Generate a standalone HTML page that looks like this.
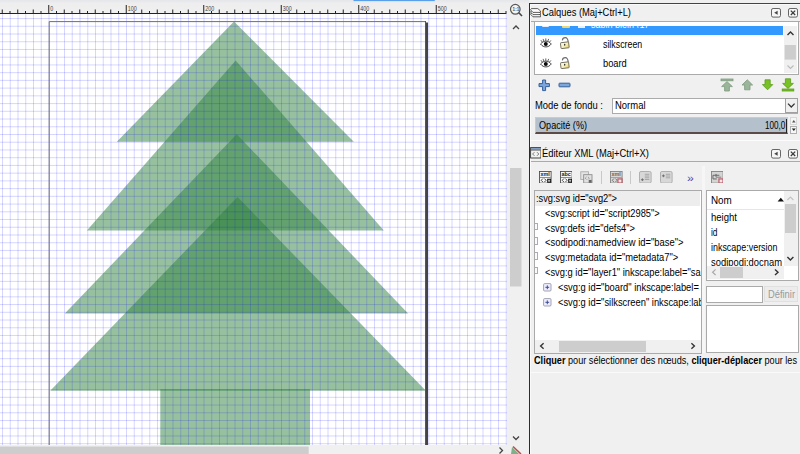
<!DOCTYPE html>
<html lang="fr"><head><meta charset="utf-8"><title>Inkscape</title>
<style>
html,body{margin:0;padding:0;background:#f0f0f0}
body{width:800px;height:454px;position:relative;overflow:hidden;font-family:"Liberation Sans",sans-serif;font-size:12px}
.a{position:absolute;display:block}
.t{position:absolute;white-space:pre;line-height:normal;transform-origin:0 0;display:block}
#rp{position:absolute;left:0;top:0;width:800px;height:454px;overflow:hidden}
</style></head><body>
<svg id="cv" width="529" height="454" viewBox="0 0 529 454" style="position:absolute;left:0;top:0">
<defs><linearGradient id="rg" x1="0" y1="0" x2="0" y2="1"><stop offset="0" stop-color="#e4e6ea"/><stop offset="0.25" stop-color="#eeeeef"/><stop offset="1" stop-color="#f0f0f0"/></linearGradient><clipPath id="cc"><rect x="0" y="14" width="507" height="431"/></clipPath></defs>
<rect x="0" y="0" width="529" height="454" fill="#f0f0f0"/>
<rect x="0" y="0" width="529" height="14" fill="url(#rg)"/>
<rect x="353.5" y="0" width="81.3" height="1.1" fill="#5aa0e8"/>
<rect x="0" y="14" width="507" height="431" fill="#ffffff"/>
<g clip-path="url(#cc)">
<polygon points="234,21.5 116.8,141.8 353.8,141.8" fill="#2f823f" fill-opacity="0.5"/>
<polygon points="235.7,60.6 86.9,230.6 383.8,230.6" fill="#2f823f" fill-opacity="0.5"/>
<polygon points="236.7,134.2 64.8,313.5 408.1,313.5" fill="#2f823f" fill-opacity="0.5"/>
<polygon points="237.5,196.9 50.2,390.8 425.9,390.8" fill="#2f823f" fill-opacity="0.5"/>
<rect x="160.3" y="389.3" width="149.7" height="70" fill="#2f823f" fill-opacity="0.5"/>
<path d="M2.50 14V445M10.25 14V445M18.00 14V445M25.75 14V445M33.50 14V445M41.25 14V445M49.00 14V445M56.75 14V445M64.50 14V445M72.25 14V445M80.00 14V445M87.75 14V445M95.50 14V445M103.25 14V445M111.00 14V445M118.75 14V445M126.50 14V445M134.25 14V445M142.00 14V445M149.75 14V445M157.50 14V445M165.25 14V445M173.00 14V445M180.75 14V445M188.50 14V445M196.25 14V445M204.00 14V445M211.75 14V445M219.50 14V445M227.25 14V445M235.00 14V445M242.75 14V445M250.50 14V445M258.25 14V445M266.00 14V445M273.75 14V445M281.50 14V445M289.25 14V445M297.00 14V445M304.75 14V445M312.50 14V445M320.25 14V445M328.00 14V445M335.75 14V445M343.50 14V445M351.25 14V445M359.00 14V445M366.75 14V445M374.50 14V445M382.25 14V445M390.00 14V445M397.75 14V445M405.50 14V445M413.25 14V445M421.00 14V445M428.75 14V445M436.50 14V445M444.25 14V445M452.00 14V445M459.75 14V445M467.50 14V445M475.25 14V445M483.00 14V445M490.75 14V445M498.50 14V445M506.25 14V445M0 18.55H507M0 26.28H507M0 34.01H507M0 41.74H507M0 49.47H507M0 57.20H507M0 64.93H507M0 72.66H507M0 80.39H507M0 88.12H507M0 95.85H507M0 103.58H507M0 111.31H507M0 119.04H507M0 126.77H507M0 134.50H507M0 142.23H507M0 149.96H507M0 157.69H507M0 165.42H507M0 173.15H507M0 180.88H507M0 188.61H507M0 196.34H507M0 204.07H507M0 211.80H507M0 219.53H507M0 227.26H507M0 234.99H507M0 242.72H507M0 250.45H507M0 258.18H507M0 265.91H507M0 273.64H507M0 281.37H507M0 289.10H507M0 296.83H507M0 304.56H507M0 312.29H507M0 320.02H507M0 327.75H507M0 335.48H507M0 343.21H507M0 350.94H507M0 358.67H507M0 366.40H507M0 374.13H507M0 381.86H507M0 389.59H507M0 397.32H507M0 405.05H507M0 412.78H507M0 420.51H507M0 428.24H507M0 435.97H507M0 443.70H507" stroke="#0000ff" stroke-opacity="0.16" stroke-width="1" fill="none"/>
<path d="M49.2 446V21.6H425.5" stroke="#707070" stroke-width="1" fill="none"/>
<rect x="425" y="21" width="1" height="430" fill="#555"/>
<rect x="426" y="22.5" width="2" height="430" fill="#444"/>
</g>
<rect x="0" y="13" width="506.5" height="1" fill="#222"/>
<g fill="#222"><rect x="1.75" y="9.5" width="1" height="4"/><rect x="9.5" y="11" width="1" height="2"/><rect x="17.25" y="9.5" width="1" height="4"/><rect x="25.0" y="11" width="1" height="2"/><rect x="32.75" y="9.5" width="1" height="4"/><rect x="40.5" y="11" width="1" height="2"/><rect x="48.25" y="5" width="1" height="8"/><rect x="56.0" y="11" width="1" height="2"/><rect x="63.75" y="9.5" width="1" height="4"/><rect x="71.5" y="11" width="1" height="2"/><rect x="79.25" y="9.5" width="1" height="4"/><rect x="87.0" y="11" width="1" height="2"/><rect x="94.75" y="9.5" width="1" height="4"/><rect x="102.5" y="11" width="1" height="2"/><rect x="110.25" y="9.5" width="1" height="4"/><rect x="118.0" y="11" width="1" height="2"/><rect x="125.75" y="5" width="1" height="8"/><rect x="133.5" y="11" width="1" height="2"/><rect x="141.25" y="9.5" width="1" height="4"/><rect x="149.0" y="11" width="1" height="2"/><rect x="156.75" y="9.5" width="1" height="4"/><rect x="164.5" y="11" width="1" height="2"/><rect x="172.25" y="9.5" width="1" height="4"/><rect x="180.0" y="11" width="1" height="2"/><rect x="187.75" y="9.5" width="1" height="4"/><rect x="195.5" y="11" width="1" height="2"/><rect x="203.25" y="5" width="1" height="8"/><rect x="211.0" y="11" width="1" height="2"/><rect x="218.75" y="9.5" width="1" height="4"/><rect x="226.5" y="11" width="1" height="2"/><rect x="234.25" y="9.5" width="1" height="4"/><rect x="242.0" y="11" width="1" height="2"/><rect x="249.75" y="9.5" width="1" height="4"/><rect x="257.5" y="11" width="1" height="2"/><rect x="265.25" y="9.5" width="1" height="4"/><rect x="273.0" y="11" width="1" height="2"/><rect x="280.75" y="5" width="1" height="8"/><rect x="288.5" y="11" width="1" height="2"/><rect x="296.25" y="9.5" width="1" height="4"/><rect x="304.0" y="11" width="1" height="2"/><rect x="311.75" y="9.5" width="1" height="4"/><rect x="319.5" y="11" width="1" height="2"/><rect x="327.25" y="9.5" width="1" height="4"/><rect x="335.0" y="11" width="1" height="2"/><rect x="342.75" y="9.5" width="1" height="4"/><rect x="350.5" y="11" width="1" height="2"/><rect x="358.25" y="5" width="1" height="8"/><rect x="366.0" y="11" width="1" height="2"/><rect x="373.75" y="9.5" width="1" height="4"/><rect x="381.5" y="11" width="1" height="2"/><rect x="389.25" y="9.5" width="1" height="4"/><rect x="397.0" y="11" width="1" height="2"/><rect x="404.75" y="9.5" width="1" height="4"/><rect x="412.5" y="11" width="1" height="2"/><rect x="420.25" y="9.5" width="1" height="4"/><rect x="428.0" y="11" width="1" height="2"/><rect x="435.75" y="5" width="1" height="8"/><rect x="443.5" y="11" width="1" height="2"/><rect x="451.25" y="9.5" width="1" height="4"/><rect x="459.0" y="11" width="1" height="2"/><rect x="466.75" y="9.5" width="1" height="4"/><rect x="474.5" y="11" width="1" height="2"/><rect x="482.25" y="9.5" width="1" height="4"/><rect x="490.0" y="11" width="1" height="2"/><rect x="497.75" y="9.5" width="1" height="4"/><rect x="505.5" y="11" width="1" height="2"/></g>
<text x="50.15" y="11" font-family="Liberation Sans, sans-serif" font-size="6.6" fill="#444" textLength="3.0" lengthAdjust="spacingAndGlyphs">0</text>
<text x="127.65" y="11" font-family="Liberation Sans, sans-serif" font-size="6.6" fill="#444" textLength="9.0" lengthAdjust="spacingAndGlyphs">100</text>
<text x="205.15" y="11" font-family="Liberation Sans, sans-serif" font-size="6.6" fill="#444" textLength="9.0" lengthAdjust="spacingAndGlyphs">200</text>
<text x="282.65" y="11" font-family="Liberation Sans, sans-serif" font-size="6.6" fill="#444" textLength="9.0" lengthAdjust="spacingAndGlyphs">300</text>
<text x="360.15" y="11" font-family="Liberation Sans, sans-serif" font-size="6.6" fill="#444" textLength="9.0" lengthAdjust="spacingAndGlyphs">400</text>
<text x="437.65" y="11" font-family="Liberation Sans, sans-serif" font-size="6.6" fill="#444" textLength="9.0" lengthAdjust="spacingAndGlyphs">500</text>
<g fill="none" stroke="#585858" stroke-width="1.25"><circle cx="515.3" cy="9.3" r="4.8" fill="#f4f4f2"/><path d="M518.8 12.8L522 16" stroke-width="1.6" stroke="#444"/></g>
<text x="512.6" y="11" font-family="Liberation Sans, sans-serif" font-size="4.6" font-weight="bold" fill="#555">1:1</text>
<path d="M513 29L516 26L519 29" stroke="#444" stroke-width="1.3" fill="none"/>
<rect x="510" y="168" width="11.5" height="118.5" fill="#cdcdcd"/>
<path d="M513 436.5L516 439.5L519 436.5" stroke="#444" stroke-width="1.3" fill="none"/>
<rect x="0" y="445" width="507" height="9" fill="#f0f0f0"/>
<rect x="0" y="446.5" width="308.7" height="8" fill="#cdcdcd"/>
<path d="M499.5 447.5L502.5 450.5L499.5 453.5" stroke="#444" stroke-width="1.3" fill="none"/>
<path d="M512 447 L519 454 L511 454Z" fill="#7fb08a"/><path d="M513 446.5L521 454" stroke="#b05050" stroke-width="1.5"/>
</svg>
<div id="rp">
<div class="a" style="left:529px;top:3px;width:271px;height:1px;background:#444"></div>
<div class="a" style="left:529px;top:3px;width:1.2px;height:451px;background:#2c2c2c"></div>
<div class="a" style="left:530.2px;top:4px;width:0.8px;height:450px;background:#fafafa"></div>
<div class="a" style="left:530.2px;top:4px;width:269.8px;height:0.8px;background:#fafafa"></div>
<svg class="a" style="left:530px;top:7.6px" width="11.4" height="10" viewBox="0 0 11.4 10"><g fill="#fbfbfb" stroke="#2a2a2a" stroke-width="0.75" stroke-linejoin="round"><path d="M1.4 5H7.8L10.6 7.4V8.8H3L0.5 6.2Z"/><path d="M1.4 2.8H7.8L10.6 5.2V6.6H3L0.5 4Z"/><path d="M1.4 0.6H7.8L10.6 3V4.4H3L0.5 1.8Z"/></g></svg>
<span class="t" style="left:541.8px;top:5.8px;font-size:10.8px;color:#000;transform:scaleX(0.8671);">Calques (Maj+Ctrl+L)</span>
<svg class="a" style="left:771px;top:7.5px" width="28" height="10" viewBox="0 0 28 10"><rect x="0.5" y="0.5" width="9" height="8.6" rx="1.6" fill="#f6f6f6" stroke="#555" stroke-width="0.9"/><path d="M6.6 2.8V6.8L3.2 4.8Z" fill="#444"/><rect x="17.5" y="0.5" width="9" height="8.6" rx="1.6" fill="#f6f6f6" stroke="#555" stroke-width="0.9"/><path d="M19.8 2.6L24.2 7M24.2 2.6L19.8 7" stroke="#3c3c3c" stroke-width="1.3"/></svg>
<div class="a" style="left:531px;top:21px;width:269px;height:1px;background:#aaa"></div>
<div class="a" style="left:534px;top:22px;width:265px;height:52.5px;background:#fff;border-left:1px solid #aaa;border-right:1px solid #aaa;border-bottom:1px solid #aaa;box-sizing:border-box"></div>
<div class="a" style="left:536px;top:25.5px;width:247.2px;height:9.4px;background:#3399ff"></div>
<div class="a" style="left:542px;top:25.5px;width:6.5px;height:1.6px;background:#e8eef8;border-radius:0 0 3px 3px"></div>
<div class="a" style="left:561.5px;top:25.5px;width:8px;height:2.2px;background:#e8d878;border-radius:0 0 1px 1px"></div>
<div class="a" style="left:577.5px;top:26.2px;width:7px;height:1.5px;background:#e6f0ff"></div>
<div class="a" style="left:591px;top:22px;width:60px;height:6.4px;overflow:hidden"><div class="a" style="left:0;top:3.5px;height:3px;width:60px;overflow:hidden"><span class="t" style="left:0.0px;top:-7.4px;font-size:10.8px;color:#fff;transform:scaleX(0.8343);">sapin plein (1)</span></div></div>
<svg class="a" style="left:539.5px;top:38px" width="12" height="10" viewBox="0 0 12 10"><path d="M0.5 6C2.5 3.7 4.2 3.2 5.9 3.2S9.5 3.8 11.3 6C9.5 8.2 7.8 8.9 5.9 8.9S2.3 8.2 0.5 6Z" fill="#fff" stroke="#222" stroke-width="0.85"/><circle cx="5.8" cy="5.9" r="2" fill="#0c0c0c"/><path d="M5.8 3V0.4M3.9 3.3L3.1 0.9M7.7 3.3L8.7 0.9M2.3 4.1L0.9 2.2M9.5 4.1L10.9 2.4" stroke="#333" stroke-width="0.75"/></svg>
<svg class="a" style="left:559.8px;top:37.4px" width="10" height="12" viewBox="0 0 10 12"><defs><linearGradient id="lk37" x1="0" y1="0" x2="1" y2="1"><stop offset="0" stop-color="#ffffff"/><stop offset="0.55" stop-color="#f4eeb8"/><stop offset="1" stop-color="#e2cf5e"/></linearGradient></defs><path d="M2.4 3.4C2.5 1.3 3.9 0.6 5.3 0.6C7.2 0.6 8 2.2 8.3 5.6" fill="none" stroke="#6c6c6c" stroke-width="1.1"/><rect x="0.7" y="5.3" width="8.2" height="5.9" rx="0.6" fill="url(#lk37)" stroke="#6e6a58" stroke-width="0.9" transform="rotate(-7 4.8 8.2)"/><ellipse cx="4.7" cy="7.7" rx="0.7" ry="1" fill="#2a2a22"/></svg>
<svg class="a" style="left:539.5px;top:57.5px" width="12" height="10" viewBox="0 0 12 10"><path d="M0.5 6C2.5 3.7 4.2 3.2 5.9 3.2S9.5 3.8 11.3 6C9.5 8.2 7.8 8.9 5.9 8.9S2.3 8.2 0.5 6Z" fill="#fff" stroke="#222" stroke-width="0.85"/><circle cx="5.8" cy="5.9" r="2" fill="#0c0c0c"/><path d="M5.8 3V0.4M3.9 3.3L3.1 0.9M7.7 3.3L8.7 0.9M2.3 4.1L0.9 2.2M9.5 4.1L10.9 2.4" stroke="#333" stroke-width="0.75"/></svg>
<svg class="a" style="left:559.8px;top:57px" width="10" height="12" viewBox="0 0 10 12"><defs><linearGradient id="lk57" x1="0" y1="0" x2="1" y2="1"><stop offset="0" stop-color="#ffffff"/><stop offset="0.55" stop-color="#f4eeb8"/><stop offset="1" stop-color="#e2cf5e"/></linearGradient></defs><path d="M2.4 3.4C2.5 1.3 3.9 0.6 5.3 0.6C7.2 0.6 8 2.2 8.3 5.6" fill="none" stroke="#6c6c6c" stroke-width="1.1"/><rect x="0.7" y="5.3" width="8.2" height="5.9" rx="0.6" fill="url(#lk57)" stroke="#6e6a58" stroke-width="0.9" transform="rotate(-7 4.8 8.2)"/><ellipse cx="4.7" cy="7.7" rx="0.7" ry="1" fill="#2a2a22"/></svg>
<span class="t" style="left:603.2px;top:38.3px;font-size:10.8px;color:#000;transform:scaleX(0.8164);">silkscreen</span>
<span class="t" style="left:603.2px;top:57.4px;font-size:10.8px;color:#000;transform:scaleX(0.8616);">board</span>
<div class="a" style="left:784.3px;top:25.5px;width:12.6px;height:47px;background:#f0f0f0"></div>
<svg class="a" style="left:784px;top:26px" width="13" height="47" viewBox="0 0 13 47"><path d="M3.5 9L6.5 6L9.5 9" stroke="#333" stroke-width="1.4" fill="none"/><rect x="0.7" y="19" width="11.2" height="14.6" fill="#cdcdcd"/><path d="M3.5 39.5L6.5 42.5L9.5 39.5" stroke="#bbb" stroke-width="1.2" fill="none"/></svg>
<svg class="a" style="left:538px;top:79px" width="34" height="13" viewBox="0 0 34 13"><path d="M4.6 1H7.6V4.6H11.4V7.6H7.6V11.6H4.6V7.6H1V4.6H4.6Z" fill="#7fa6d8" stroke="#33609e" stroke-width="1"/><rect x="21" y="4.2" width="11" height="3.6" rx="0.6" fill="#7fa6d8" stroke="#33609e" stroke-width="1"/></svg>
<svg class="a" style="left:719px;top:78px" width="78" height="14" viewBox="0 0 78 14"><g fill="#9ab59a" stroke="#7d9a7d" stroke-width="0.8"><rect x="2" y="1" width="12" height="1.8"/><path d="M5.6 13V8.6H2.6L8 3.6L13.4 8.6H10.4V13Z"/><path d="M25.6 11.8V7H23L28.3 1.8L33.6 7H31V11.8Z"/></g><g fill="#79c224" stroke="#5a9a1a" stroke-width="0.8"><path d="M46 1.8V6.6H43.4L48.6 11.8L53.8 6.6H51.2V1.8Z"/><path d="M66.4 0.8V5.4H63.6L69 10.4L74.4 5.4H71.6V0.8Z"/><rect x="63.2" y="11" width="11.6" height="2"/></g></svg>
<span class="t" style="left:534.7px;top:98.8px;font-size:10.8px;color:#000;transform:scaleX(0.8712);">Mode de fondu :</span>
<div class="a" style="left:612px;top:97.5px;width:186px;height:16px;background:#fff;border:1px solid #ababab;box-sizing:border-box"></div>
<div class="a" style="left:784.5px;top:98px;width:13.2px;height:15px;background:#f0f0f0;border:1px solid #a0a0a0;box-sizing:border-box"></div>
<svg class="a" style="left:786px;top:101px" width="11" height="9" viewBox="0 0 11 9"><path d="M2 2.6L5.3 6L8.6 2.6" stroke="#333" stroke-width="1.3" fill="none"/></svg>
<span class="t" style="left:615.3px;top:98.8px;font-size:10.8px;color:#000;transform:scaleX(0.8763);">Normal</span>
<div class="a" style="left:534.5px;top:116.5px;width:253px;height:17.2px;background:#b4c0cc;border:1px solid #c8ccd0;border-bottom:2px solid #5a4a48;box-sizing:border-box"></div>
<div class="a" style="left:786.3px;top:118.5px;width:1.2px;height:14px;background:#222"></div>
<span class="t" style="left:539.0px;top:118.5px;font-size:10.8px;color:#000;transform:scaleX(0.8419);">Opacité (%)</span>
<span class="t" style="left:765.3px;top:118.5px;font-size:10.8px;color:#000;transform:scaleX(0.7512);">100,0</span>
<div class="a" style="left:789.8px;top:117px;width:7.6px;height:8px;background:#f6f6f6;border:1px solid #d8d8d8;box-sizing:border-box"></div>
<div class="a" style="left:789.8px;top:125.5px;width:7.6px;height:8px;background:#f6f6f6;border:1px solid #b0b0b0;box-sizing:border-box"></div>
<svg class="a" style="left:790px;top:117px" width="8" height="17" viewBox="0 0 8 17"><path d="M2 5.4H5.6L3.8 3Z" fill="#555"/><path d="M1.8 11.4H5.8L3.8 14Z" fill="#222"/></svg>
<div class="a" style="left:531px;top:140px;width:269px;height:1.2px;background:#fcfcfc"></div>
<svg class="a" style="left:529.6px;top:147.3px" width="11.6" height="11.8" viewBox="0 0 11.6 11.8"><rect x="0.6" y="0.6" width="10.4" height="10.4" fill="#f2f2f0" stroke="#3a3a3a" stroke-width="0.95"/><rect x="1" y="1.1" width="9.6" height="1.9" fill="#7896be"/><path d="M1 3.3H10.6" stroke="#444" stroke-width="0.6"/><path d="M4.4 5.2L2.6 7L4.4 8.8M7 5.2L8.8 7L7 8.8" stroke="#777" stroke-width="1" fill="none"/></svg>
<span class="t" style="left:542.0px;top:146.9px;font-size:10.8px;color:#000;transform:scaleX(0.8682);">Éditeur XML (Maj+Ctrl+X)</span>
<svg class="a" style="left:771px;top:148.5px" width="28" height="10" viewBox="0 0 28 10"><rect x="0.5" y="0.5" width="9" height="8.6" rx="1.6" fill="#f6f6f6" stroke="#555" stroke-width="0.9"/><path d="M6.6 2.8V6.8L3.2 4.8Z" fill="#444"/><rect x="17.5" y="0.5" width="9" height="8.6" rx="1.6" fill="#f6f6f6" stroke="#555" stroke-width="0.9"/><path d="M19.8 2.6L24.2 7M24.2 2.6L19.8 7" stroke="#3c3c3c" stroke-width="1.3"/></svg>
<div class="a" style="left:531px;top:161.3px;width:269px;height:1px;background:#aaa"></div>
<svg class="a" style="left:539px;top:170.8px" width="12.6" height="12.6" viewBox="0 0 13 13"><rect x="0.5" y="0.5" width="12" height="12" fill="#f8f8f8" stroke="#4a4a4a" stroke-width="0.9"/><text x="1.6" y="5.6" font-family="Liberation Sans, sans-serif" font-size="5.4" font-weight="bold" fill="#222" textLength="9.6" lengthAdjust="spacingAndGlyphs">xml</text><path d="M1 6.7H12" stroke="#555" stroke-width="0.7"/><path d="M4 7.8L2.3 9.6L4 11.4M5.6 7.8L7.3 9.6L5.6 11.4" stroke="#333" stroke-width="0.9" fill="none"/><rect x="8.4" y="8" width="4" height="4.2" fill="#1a1a1a"/><path d="M10.4 8.8V11.4M9.2 10.1H11.6" stroke="#fff" stroke-width="0.7"/></svg>
<svg class="a" style="left:559.5px;top:170.8px" width="12.6" height="12.6" viewBox="0 0 13 13"><rect x="0.5" y="0.5" width="12" height="12" fill="#f8f8f8" stroke="#4a4a4a" stroke-width="0.9"/><text x="1.6" y="5.6" font-family="Liberation Sans, sans-serif" font-size="5.4" font-weight="bold" fill="#222" textLength="9.6" lengthAdjust="spacingAndGlyphs">abc</text><path d="M1 6.7H12" stroke="#555" stroke-width="0.7"/><path d="M4 7.8L2.3 9.6L4 11.4M5.6 7.8L7.3 9.6L5.6 11.4" stroke="#333" stroke-width="0.9" fill="none"/><rect x="8.4" y="8" width="4" height="4.2" fill="#1a1a1a"/><path d="M10.4 8.8V11.4M9.2 10.1H11.6" stroke="#fff" stroke-width="0.7"/></svg>
<svg class="a" style="left:580px;top:170.8px" width="12.6" height="12.6" viewBox="0 0 13 13"><rect x="0.8" y="0.8" width="8" height="8" fill="#e4e4e4" stroke="#aaa" stroke-width="0.9"/><rect x="3.8" y="3.8" width="8.6" height="8.6" fill="#e0e0e0" stroke="#8c8c8c" stroke-width="0.9"/><path d="M6.8 6L5.4 7.4L6.8 8.8M8.2 6L9.6 7.4L8.2 8.8" stroke="#888" stroke-width="0.8" fill="none"/><rect x="9" y="9.2" width="3" height="3" fill="#666"/></svg>
<div class="a" style="left:600.5px;top:171px;width:1px;height:13px;background:#c8c8c8"></div>
<svg class="a" style="left:610px;top:170.8px" width="12.6" height="12.6" viewBox="0 0 13 13"><rect x="0.5" y="0.5" width="12" height="12" fill="#d8d8d8" stroke="#808080" stroke-width="0.9"/><text x="1.6" y="5.6" font-family="Liberation Sans, sans-serif" font-size="5.4" font-weight="bold" fill="#666" textLength="9.6" lengthAdjust="spacingAndGlyphs">xml</text><path d="M1 6.7H12" stroke="#888" stroke-width="0.7"/><path d="M4 7.8L2.3 9.6L4 11.4M5.6 7.8L7.3 9.6L5.6 11.4" stroke="#666" stroke-width="0.9" fill="none"/><rect x="8.2" y="8.2" width="4.2" height="4.2" fill="#f4e4e6" stroke="#b85a66" stroke-width="1.2"/></svg>
<div class="a" style="left:630.2px;top:171px;width:1px;height:13px;background:#c8c8c8"></div>
<svg class="a" style="left:639.3px;top:170.8px" width="12.6" height="12.6" viewBox="0 0 13 13"><rect x="0.5" y="0.5" width="12" height="12" rx="1.5" fill="#d8d8d8" stroke="#a8a8a8" stroke-width="0.9"/><path d="M6 3.4H10.6M6 5.2H10.6M6 7H10.6M6 8.8H10.6" stroke="#999" stroke-width="0.8"/><path d="M2 9H5M3.5 7.6V10.4" stroke="#666" stroke-width="0.9"/></svg>
<svg class="a" style="left:660px;top:170.8px" width="12.6" height="12.6" viewBox="0 0 13 13"><rect x="0.5" y="0.5" width="12" height="12" rx="1.5" fill="#d8d8d8" stroke="#a8a8a8" stroke-width="0.9"/><path d="M6 3.4H10.6M6 5.2H10.6M6 7H10.6" stroke="#999" stroke-width="0.8"/><path d="M2 5H5M3.5 3.6V6.4" stroke="#666" stroke-width="0.9"/></svg>
<span class="t" style="left:687.0px;top:171.5px;font-size:11px;color:#4848a8;transform:scaleX(1.1116);">»</span>
<svg class="a" style="left:710.8px;top:170.8px" width="12.6" height="12.6" viewBox="0 0 13 13"><rect x="0.5" y="0.5" width="12" height="12" fill="#d4d4d4" stroke="#808080" stroke-width="0.9"/><path d="M2 4.4H8.6M5.2 3V6M2 4.4V8.2M2 8.2H6" stroke="#666" stroke-width="1"/><path d="M5 6.4H10.6" stroke="#777" stroke-width="0.9"/><rect x="8.2" y="8.2" width="4.2" height="4.2" fill="#f4e4e6" stroke="#b85a66" stroke-width="1.2"/></svg>
<div class="a" style="left:701.8px;top:166px;width:3.6px;height:187px;background:#f6f6f6"></div>
<div class="a" style="left:534px;top:189.5px;width:167.5px;height:164px;background:#fff;border:1px solid #aaa;box-sizing:border-box;overflow:hidden" id="xl">
<div class="a" style="left:0;top:0.5px;width:165px;height:14.6px;background:#ededed"></div>
<span class="t" style="left:0.6px;top:1.0px;font-size:10.8px;color:#000;transform:scaleX(0.8606);">:svg:svg id="svg2"&gt;</span>
<span class="t" style="left:10.3px;top:16.5px;font-size:10.8px;color:#000;transform:scaleX(0.8596);">&lt;svg:script id="script2985"&gt;</span>
<span class="t" style="left:10.3px;top:31.2px;font-size:10.8px;color:#000;transform:scaleX(0.8601);">&lt;svg:defs id="defs4"&gt;</span>
<span class="t" style="left:10.3px;top:45.9px;font-size:10.8px;color:#000;transform:scaleX(0.8696);">&lt;sodipodi:namedview id="base"&gt;</span>
<span class="t" style="left:10.3px;top:60.7px;font-size:10.8px;color:#000;transform:scaleX(0.8657);">&lt;svg:metadata id="metadata7"&gt;</span>
<span class="t" style="left:10.3px;top:75.4px;font-size:10.8px;color:#000;transform:scaleX(0.8650);">&lt;svg:g id="layer1" inkscape:label="sa</span>
<span class="t" style="left:22.6px;top:90.2px;font-size:10.8px;color:#000;transform:scaleX(0.8650);">&lt;svg:g id="board" inkscape:label=</span>
<span class="t" style="left:22.6px;top:105.0px;font-size:10.8px;color:#000;transform:scaleX(0.8650);">&lt;svg:g id="silkscreen" inkscape:lab</span>
<div class="a" style="left:0;top:32.2px;width:2.6px;height:7.4px;border:1px solid #aab;border-left:none;box-sizing:border-box;background:#fafaff"></div>
<div class="a" style="left:0;top:46.9px;width:2.6px;height:7.4px;border:1px solid #aab;border-left:none;box-sizing:border-box;background:#fafaff"></div>
<div class="a" style="left:0;top:61.7px;width:2.6px;height:7.4px;border:1px solid #aab;border-left:none;box-sizing:border-box;background:#fafaff"></div>
<div class="a" style="left:0;top:76.4px;width:2.6px;height:7.4px;border:1px solid #aab;border-left:none;box-sizing:border-box;background:#fafaff"></div>
<svg class="a" style="left:8.3px;top:92.6px" width="9" height="9" viewBox="0 0 9 9"><rect x="0.6" y="0.6" width="7.4" height="7.4" rx="1" fill="#eef" stroke="#99a" stroke-width="0.9"/><path d="M2.4 4.3H6.2M4.3 2.4V6.2" stroke="#3a4a9a" stroke-width="1"/></svg>
<svg class="a" style="left:8.3px;top:107.4px" width="9" height="9" viewBox="0 0 9 9"><rect x="0.6" y="0.6" width="7.4" height="7.4" rx="1" fill="#eef" stroke="#99a" stroke-width="0.9"/><path d="M2.4 4.3H6.2M4.3 2.4V6.2" stroke="#3a4a9a" stroke-width="1"/></svg>
<div class="a" style="left:0;top:149.8px;width:166px;height:12.7px;background:#f0f0f0"></div>
<div class="a" style="left:24px;top:150.2px;width:87px;height:11.6px;background:#cdcdcd"></div>
<svg class="a" style="left:0;top:149.6px" width="166" height="12" viewBox="0 0 166 12"><path d="M8.6 3.2L5.6 6L8.6 8.8" stroke="#333" stroke-width="1.4" fill="none"/><path d="M156.4 3.2L159.4 6L156.4 8.8" stroke="#333" stroke-width="1.4" fill="none"/></svg>
</div>
<div class="a" style="left:705.5px;top:189.5px;width:93.2px;height:91px;background:#fff;border:1px solid #aaa;box-sizing:border-box;overflow:hidden" id="al">
<span class="t" style="left:4.5px;top:3.4px;font-size:10.8px;color:#000;transform:scaleX(0.9122);">Nom</span>
<svg class="a" style="left:70px;top:6.5px" width="8" height="5" viewBox="0 0 8 5"><path d="M0.6 4.4H7L3.8 0.8Z" fill="#111"/></svg>
<div class="a" style="left:0;top:18.6px;width:77px;height:1px;background:#dde8f6"></div>
<span class="t" style="left:4.3px;top:20.6px;font-size:10.8px;color:#000;transform:scaleX(0.8836);">height</span>
<span class="t" style="left:4.3px;top:35.5px;font-size:10.8px;color:#000;transform:scaleX(0.7732);">id</span>
<span class="t" style="left:4.3px;top:50.4px;font-size:10.8px;color:#000;transform:scaleX(0.8267);">inkscape:version</span>
<span class="t" style="left:4.3px;top:65.1px;font-size:10.8px;color:#000;transform:scaleX(0.8695);">sodipodi:docnam</span>
<div class="a" style="left:77.8px;top:0;width:13.4px;height:75.5px;background:#f0f0f0"></div>
<div class="a" style="left:78.3px;top:13.8px;width:11.2px;height:28.3px;background:#cdcdcd"></div>
<svg class="a" style="left:77.8px;top:0" width="13" height="76" viewBox="0 0 13 76"><path d="M3.4 9L6.4 6L9.4 9" stroke="#c4c4c4" stroke-width="1.2" fill="none"/><path d="M3.4 66L6.4 69L9.4 66" stroke="#333" stroke-width="1.4" fill="none"/></svg>
<div class="a" style="left:0;top:75.5px;width:77.8px;height:12.6px;background:#f0f0f0"></div>
<div class="a" style="left:77.8px;top:75.5px;width:14px;height:13px;background:#fff"></div>
<div class="a" style="left:13.5px;top:76.2px;width:23px;height:11.2px;background:#cdcdcd"></div>
<svg class="a" style="left:0;top:75.5px" width="78" height="13" viewBox="0 0 78 13"><path d="M8.6 3.4L5.6 6.2L8.6 9" stroke="#aaa" stroke-width="1.2" fill="none"/><path d="M68 3.4L71 6.2L68 9" stroke="#333" stroke-width="1.4" fill="none"/></svg>
</div>
<div class="a" style="left:705.5px;top:285.5px;width:57.2px;height:17px;background:#fff;border:1px solid #aaa;box-sizing:border-box"></div>
<div class="a" style="left:764px;top:285.8px;width:33.6px;height:16.4px;background:#ececec;border:1px solid #e0e0e0;box-sizing:border-box"></div>
<span class="t" style="left:768.0px;top:287.7px;font-size:10.8px;color:#9a9a9a;transform:scaleX(0.8651);">Définir</span>
<div class="a" style="left:705.5px;top:304.7px;width:93.2px;height:48.8px;background:#fff;border:1px solid #aaa;box-sizing:border-box"></div>
<span class="t" style="left:534.2px;top:354.4px;font-size:10.8px;color:#000;transform:scaleX(0.8459)"><b>Cliquer</b> pour sélectionner des nœuds, <b>cliquer-déplacer</b> pour les</span>
<div class="a" style="left:531px;top:371.6px;width:269px;height:1.2px;background:#fafafa"></div>
</div>
</body></html>
